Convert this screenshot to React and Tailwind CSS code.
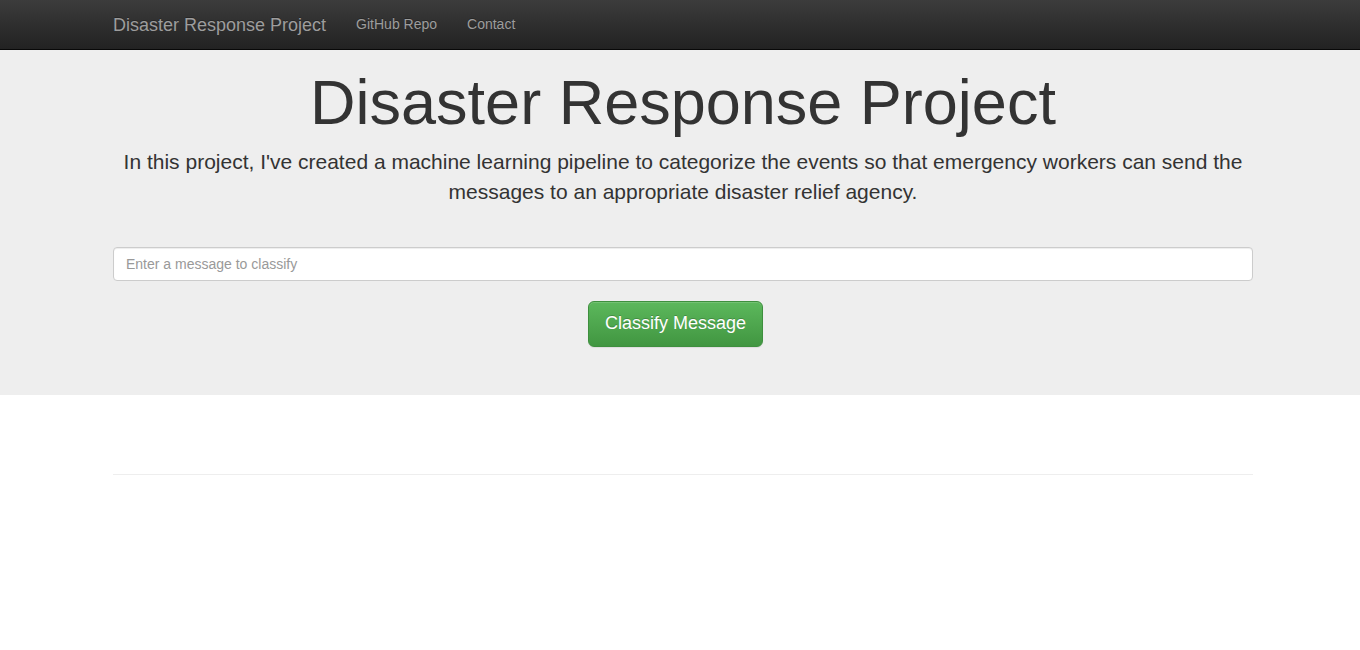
import React from 'react';

export default function App() {
  return (
    <div className="min-h-[650px] bg-white text-[#333] font-['Liberation_Sans',Arial,sans-serif] text-[14px] leading-[1.42857]">
      <nav className="h-[50px] border-b border-[#080808] bg-gradient-to-b from-[#3c3c3c] to-[#222]">
        <div className="ml-[98px] flex h-[49px] w-[1170px] items-center px-[15px]">
          <a className="text-[18px] leading-[20px] text-[#9d9d9d] [text-shadow:0_-1px_0_rgba(0,0,0,0.25)]">
            Disaster Response Project
          </a>
          <ul className="ml-[15px] flex">
            <li>
              <a className="block px-[15px] text-[14px] text-[#9d9d9d] [text-shadow:0_-1px_0_rgba(0,0,0,0.25)]">GitHub Repo</a>
            </li>
            <li>
              <a className="block px-[15px] text-[14px] text-[#9d9d9d] [text-shadow:0_-1px_0_rgba(0,0,0,0.25)]">Contact</a>
            </li>
          </ul>
        </div>
      </nav>

      <div className="bg-[#eee] pb-[48px]">
        <div className="ml-[98px] w-[1170px] px-[15px]">
          <h1 className="pt-[18px] text-center text-[63px] leading-[1.1] text-[#333]">Disaster Response Project</h1>
          <p className="mt-[10px] text-center text-[21px] leading-[30px] text-[#333]">
            In this project, I've created a machine learning pipeline to categorize the events so that emergency workers can send the messages to an appropriate disaster relief agency.
          </p>
          <form className="mt-[40px]">
            <input
              type="text"
              placeholder="Enter a message to classify"
              className="block h-[34px] w-full rounded-[4px] border border-[#ccc] bg-white px-[12px] text-[14px] text-[#555] shadow-[inset_0_1px_1px_rgba(0,0,0,0.075)] outline-none placeholder:text-[#999]"
            />
            <div className="mt-[20px] flex">
              <button
                type="button"
                className="ml-[475px] h-[46px] w-[175px] whitespace-nowrap rounded-[6px] border border-[#3e8f3e] bg-gradient-to-b from-[#5cb85c] to-[#419641] px-0 text-[18px] leading-[1.3333] text-white [text-shadow:0_-1px_0_rgba(0,0,0,0.2)] shadow-[inset_0_1px_0_rgba(255,255,255,0.15),0_1px_1px_rgba(0,0,0,0.075)]"
              >
                Classify Message
              </button>
            </div>
          </form>
        </div>
      </div>

      <div className="ml-[98px] w-[1170px] px-[15px]">
        <hr className="mt-[79px] border-0 border-t border-[#eee]" />
      </div>
    </div>
  );
}
